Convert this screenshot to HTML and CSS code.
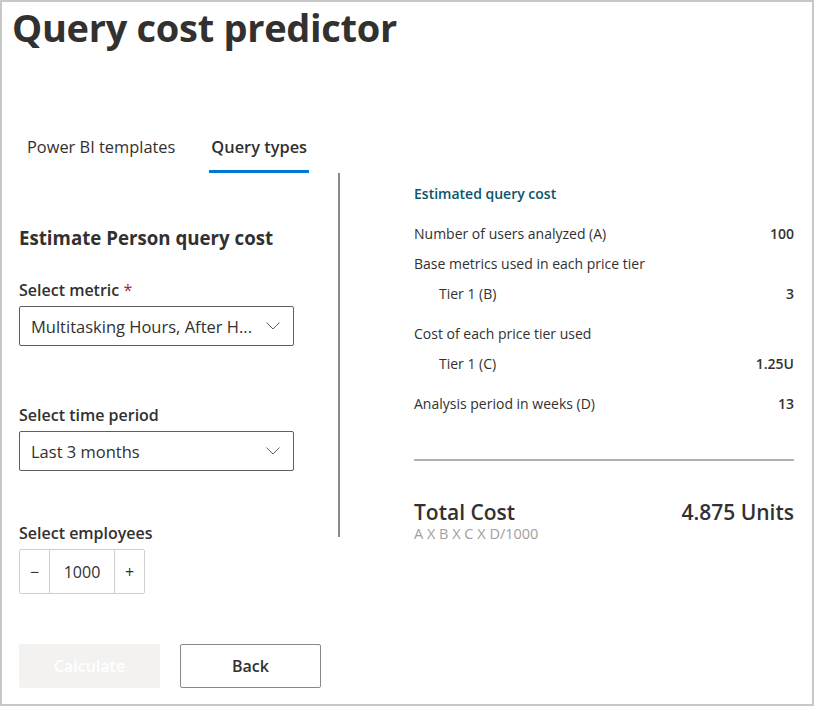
FILE: index.html
```html
<!DOCTYPE html>
<html>
<head>
<meta charset="utf-8">
<link rel="stylesheet" href="styles.css">
</head>
<body>
<div class="frame">
  <h1 class="title">Query cost predictor</h1>
  <div class="tabs">
    <div class="tab">Power BI templates</div>
    <div class="tab active">Query types</div>
  </div>
  <div class="main">
    <div class="left">
      <h2 class="heading">Estimate Person query cost</h2>
      <div class="field">
        <div class="label">Select metric <span class="req">*</span></div>
        <div class="dropdown">
          <span class="dd-text">Multitasking Hours, After H...</span>
          <svg class="chev" width="14" height="8" viewBox="0 0 14 8"><path d="M0.5 0.5 L7 7 L13.5 0.5" fill="none" stroke="#605e5c" stroke-width="1"/></svg>
        </div>
      </div>
      <div class="field">
        <div class="label">Select time period</div>
        <div class="dropdown">
          <span class="dd-text">Last 3 months</span>
          <svg class="chev" width="14" height="8" viewBox="0 0 14 8"><path d="M0.5 0.5 L7 7 L13.5 0.5" fill="none" stroke="#605e5c" stroke-width="1"/></svg>
        </div>
      </div>
      <div class="field">
        <div class="label">Select employees</div>
        <div class="spinner">
          <div class="sp-btn">&minus;</div>
          <div class="sp-val">1000</div>
          <div class="sp-btn">+</div>
        </div>
      </div>
    </div>
    <div class="divider"></div>
    <div class="right">
      <div class="r-title">Estimated query cost</div>
      <div class="row"><span>Number of users analyzed (A)</span><span class="val">100</span></div>
      <div class="row"><span>Base metrics used in each price tier</span></div>
      <div class="row sub"><span>Tier 1 (B)</span><span class="val">3</span></div>
      <div class="row gap"><span>Cost of each price tier used</span></div>
      <div class="row sub"><span>Tier 1 (C)</span><span class="val">1.25U</span></div>
      <div class="row gap"><span>Analysis period in weeks (D)</span><span class="val">13</span></div>
      <div class="hr"></div>
      <div class="total"><span>Total Cost</span><span>4.875 Units</span></div>
      <div class="formula">A X B X C X D/1000</div>
    </div>
  </div>
  <div class="actions">
    <div class="btn disabled">Calculate</div>
    <div class="btn outline">Back</div>
  </div>
</div>
</body>
</html>
```

FILE: styles.css
```css
* { box-sizing: border-box; }
html, body { margin: 0; padding: 0; background: #ffffff; }
body {
  font-family: "Open Sans", "Noto Sans", "Liberation Sans", sans-serif;
  color: #323130;
}
.frame {
  width: 814px;
  height: 706px;
  border: 2px solid #c8c8c8;
  overflow: hidden;
}
.title {
  margin: 0;
  padding: 0 0 0 10px;
  font-size: 38px;
  font-weight: 700;
  line-height: 50px;
  color: #323130;
  letter-spacing: -0.3px;
}
.tabs {
  display: flex;
  gap: 34px;
  margin-top: 80px;
  padding-left: 25px;
  height: 41px;
}
.tab {
  font-size: 16.4px;
  line-height: 30px;
  color: #323130;
}
.tab.active {
  font-weight: 600;
  border-bottom: 3px solid #0078d4;
  padding: 0 2px;
  height: 41px;
}
.main {
  display: flex;
}
.left {
  width: 336px;
  padding-left: 17px;
  padding-top: 53px;
}
.heading {
  margin: 0;
  font-size: 18.7px;
  font-weight: 700;
  line-height: 24px;
}
.field { margin-top: 29px; }
.field + .field { margin-top: 58px; }
.field:last-child { margin-top: 51px; }
.label {
  font-size: 16px;
  font-weight: 600;
  line-height: 22px;
  margin-bottom: 5px;
}
.req { color: #a4262c; font-weight: 400; }
.dropdown {
  width: 275px;
  height: 40px;
  border: 1px solid #605e5c;
  border-radius: 2px;
  display: flex;
  align-items: center;
  justify-content: space-between;
  padding: 0 13px 0 11px;
}
.dd-text {
  font-size: 16.5px;
  white-space: nowrap;
}
.chev { flex: none; }
.spinner {
  display: flex;
  height: 45px;
  width: 126px;
  border: 1px solid #d2d0ce;
  border-radius: 2px;
}
.sp-btn {
  width: 29px;
  display: flex;
  align-items: center;
  justify-content: center;
  font-size: 16px;
}
.sp-val {
  flex: 1;
  border-left: 1px solid #d2d0ce;
  border-right: 1px solid #d2d0ce;
  display: flex;
  align-items: center;
  justify-content: center;
  font-size: 16px;
}
.divider {
  width: 2px;
  height: 364px;
  background: #8a8886;
}
.right {
  width: 380px;
  margin-left: 74px;
  padding-top: 11px;
  font-size: 14px;
}
.r-title {
  color: #0b556a;
  font-weight: 600;
  line-height: 20px;
  margin-bottom: 20px;
}
.row {
  display: flex;
  justify-content: space-between;
  line-height: 20px;
  margin-bottom: 10px;
}
.row.sub { padding-left: 25px; }
.row.gap { margin-top: 20px; }
.val { font-weight: 600; }
.hr {
  height: 2px;
  background: #b3b0ad;
  margin-top: 45px;
}
.total {
  display: flex;
  justify-content: space-between;
  font-size: 21px;
  font-weight: 600;
  line-height: 26px;
  margin-top: 38px;
}
.formula {
  font-size: 14.5px;
  color: #a19f9d;
  line-height: 18px;
}
.actions {
  display: flex;
  gap: 20px;
  padding-left: 17px;
  margin-top: 50px;
}
.btn {
  width: 141px;
  height: 44px;
  display: flex;
  align-items: center;
  justify-content: center;
  font-size: 16px;
  font-weight: 600;
  border-radius: 2px;
}
.btn.disabled {
  background: #f3f2f1;
  color: #ffffff;
}
.btn.outline {
  border: 1px solid #8a8886;
  color: #323130;
}
```
